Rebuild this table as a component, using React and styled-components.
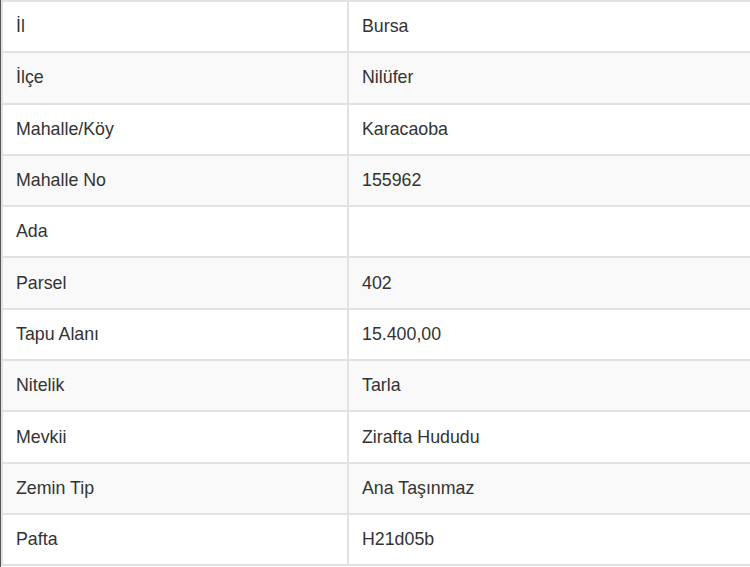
import React from 'react';
import styled, { createGlobalStyle } from 'styled-components';

const GlobalStyle = createGlobalStyle`
  html, body {
    margin: 0;
    padding: 0;
    background: #fff;
  }
  body {
    font-family: "Liberation Sans", Arial, sans-serif;
    color: #333;
  }
`;

const Frame = styled.div`
  width: 750px;
  height: 567px;
  overflow: hidden;
  border-left: 1px solid #555;
  box-sizing: border-box;
`;

const Table = styled.table`
  width: 100%;
  border-collapse: collapse;
  table-layout: fixed;
  font-size: 17.8px;
  border-left: 2px solid #e2e2e2;
`;

const Row = styled.tr`
  background: ${props => (props.striped ? '#f9f9f9' : '#fff')};
  border-top: 2px solid #e2e2e2;
  border-bottom: 2px solid #e2e2e2;
`;

const Label = styled.td`
  width: 346px;
  height: 51.3px;
  padding: 0 0 0 13px;
  border-right: 2px solid #e2e2e2;
  box-sizing: border-box;
  vertical-align: middle;
`;

const Value = styled.td`
  padding: 0 0 0 13px;
  vertical-align: middle;
`;

const rows = [
  ['İl', 'Bursa'],
  ['İlçe', 'Nilüfer'],
  ['Mahalle/Köy', 'Karacaoba'],
  ['Mahalle No', '155962'],
  ['Ada', ''],
  ['Parsel', '402'],
  ['Tapu Alanı', '15.400,00'],
  ['Nitelik', 'Tarla'],
  ['Mevkii', 'Zirafta Hududu'],
  ['Zemin Tip', 'Ana Taşınmaz'],
  ['Pafta', 'H21d05b'],
];

export default function App() {
  return (
    <>
      <GlobalStyle />
      <Frame>
        <Table>
          <tbody>
            {rows.map(([label, value], i) => (
              <Row key={label} striped={i % 2 === 1}>
                <Label>{label}</Label>
                <Value>{value}</Value>
              </Row>
            ))}
          </tbody>
        </Table>
      </Frame>
    </>
  );
}
